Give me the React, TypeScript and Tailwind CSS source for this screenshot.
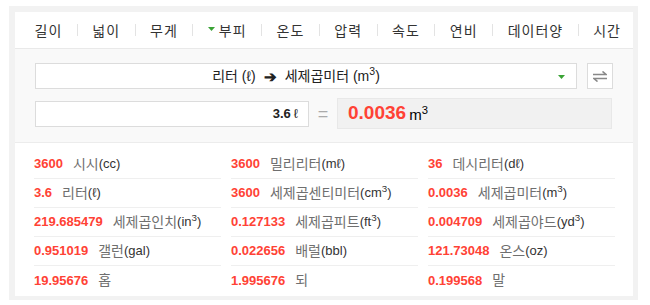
const tabs = ['길이', '넓이', '무게', '부피', '온도', '압력', '속도', '연비', '데이터양', '시간'];

type Item = { value: string; name: string; unit?: string; sup?: boolean };

const results: Item[] = [
  { value: '3600', name: '시시', unit: '(cc)' },
  { value: '3600', name: '밀리리터', unit: '(mℓ)' },
  { value: '36', name: '데시리터', unit: '(dℓ)' },
  { value: '3.6', name: '리터', unit: '(ℓ)' },
  { value: '3600', name: '세제곱센티미터', unit: '(cm', sup: true },
  { value: '0.0036', name: '세제곱미터', unit: '(m', sup: true },
  { value: '219.685479', name: '세제곱인치', unit: '(in', sup: true },
  { value: '0.127133', name: '세제곱피트', unit: '(ft', sup: true },
  { value: '0.004709', name: '세제곱야드', unit: '(yd', sup: true },
  { value: '0.951019', name: '갤런', unit: '(gal)' },
  { value: '0.022656', name: '배럴', unit: '(bbl)' },
  { value: '121.73048', name: '온스', unit: '(oz)' },
  { value: '19.95676', name: '홉' },
  { value: '1.995676', name: '되' },
  { value: '0.199568', name: '말' },
];

const font = { fontFamily: '"Liberation Sans", "Noto Sans CJK KR", sans-serif' };

const Caret = ({ className }: { className?: string }) => (
  <svg className={className} width="7" height="4" viewBox="0 0 7 4">
    <path d="M0 0h7L3.5 4z" fill="#3aa335" />
  </svg>
);

export default function App() {
  return (
    <div className="w-[650px] h-[305px] bg-white pl-[9px] pt-[6px]" style={font}>
      <div className="w-[629px] h-[294px] bg-[#f2f2f2] pl-[6px] pt-[6px] pr-[5px] pb-[4px]">
        <div className="bg-white h-full flex flex-col">
          {/* tabs */}
          <div className="h-[37px] flex items-center pl-[5px] border-b border-[#e9e9e9] text-[14px] tracking-[1px] text-[#333] whitespace-nowrap overflow-hidden">
            {tabs.map((t, i) => (
              <div key={t} className="flex items-center shrink-0">
                {i > 0 && <div className="w-px h-3 bg-[#e3e3e3]" />}
                <span className="px-[14.5px] flex items-center pt-[2px]">
                  {t === '부피' && <Caret className="mr-[4px] -mt-[5px]" />}
                  {t}
                </span>
              </div>
            ))}
          </div>

          {/* converter */}
          <div className="bg-[#f9f9f9] h-[94px] border-b border-[#ececec] pl-[20px] pt-[14px]">
            <div className="flex items-center gap-[10px]">
              <div className="w-[542px] h-[26px] bg-white border border-[#dcdcdc] flex items-center justify-center relative text-[14px] text-[#222] pr-[20px]">
                <span>리터 (ℓ)</span>
                <span className="mx-[8px] font-bold text-[15px] leading-none">➔</span>
                <span>
                  세제곱미터 (m<sup>3</sup>)
                </span>
                <Caret className="absolute right-[11px] top-[11px]" />
              </div>
              <div className="w-[26px] h-[26px] bg-white border border-[#dcdcdc] flex items-center justify-center">
                <svg width="14" height="11" viewBox="0 0 14 11">
                  <path d="M0 3.5h13L9.5 0.5" stroke="#888" strokeWidth="1.6" fill="none" />
                  <path d="M14 7.5H1l3.5 3" stroke="#888" strokeWidth="1.6" fill="none" />
                </svg>
              </div>
            </div>
            <div className="flex items-center mt-[9px]">
              <div className="w-[274px] h-[26px] bg-white border border-[#dcdcdc] flex items-center justify-end pr-[10px] text-[13px] text-[#222]">
                <span className="font-bold">3.6</span>
                <span className="ml-[3px]">ℓ</span>
              </div>
              <span className="w-[28px] text-center text-[18px] text-[#aaa] leading-none">=</span>
              <div className="w-[275px] h-[31px] bg-[#f1f1f1] border border-[#e8e8e8] flex items-center pl-[10px]">
                <span className="text-[19px] font-bold text-[#ff4235]">0.0036</span>
                <span className="ml-[3px] text-[15px] text-black pt-[3px]">
                  m<sup>3</sup>
                </span>
              </div>
            </div>
          </div>

          {/* results */}
          <div className="grid grid-cols-[187px_187px_187px] gap-x-[10px] pl-[19px] pt-[7px]">
            {results.map((r, i) => (
              <div
                key={i}
                className={`h-[29px] flex items-center text-[13px] whitespace-nowrap ${i < 12 ? 'border-b border-[#efefef]' : ''}`}
              >
                <span className="font-bold text-[#ff4235]">{r.value}</span>
                <span className="ml-[10px] text-[#6f6f6f] text-[14px]">{r.name}</span>
                {r.unit && (
                  <span className="text-[#333]">
                    {r.unit}
                    {r.sup && (
                      <>
                        <sup>3</sup>)
                      </>
                    )}
                  </span>
                )}
              </div>
            ))}
          </div>
        </div>
      </div>
    </div>
  );
}
